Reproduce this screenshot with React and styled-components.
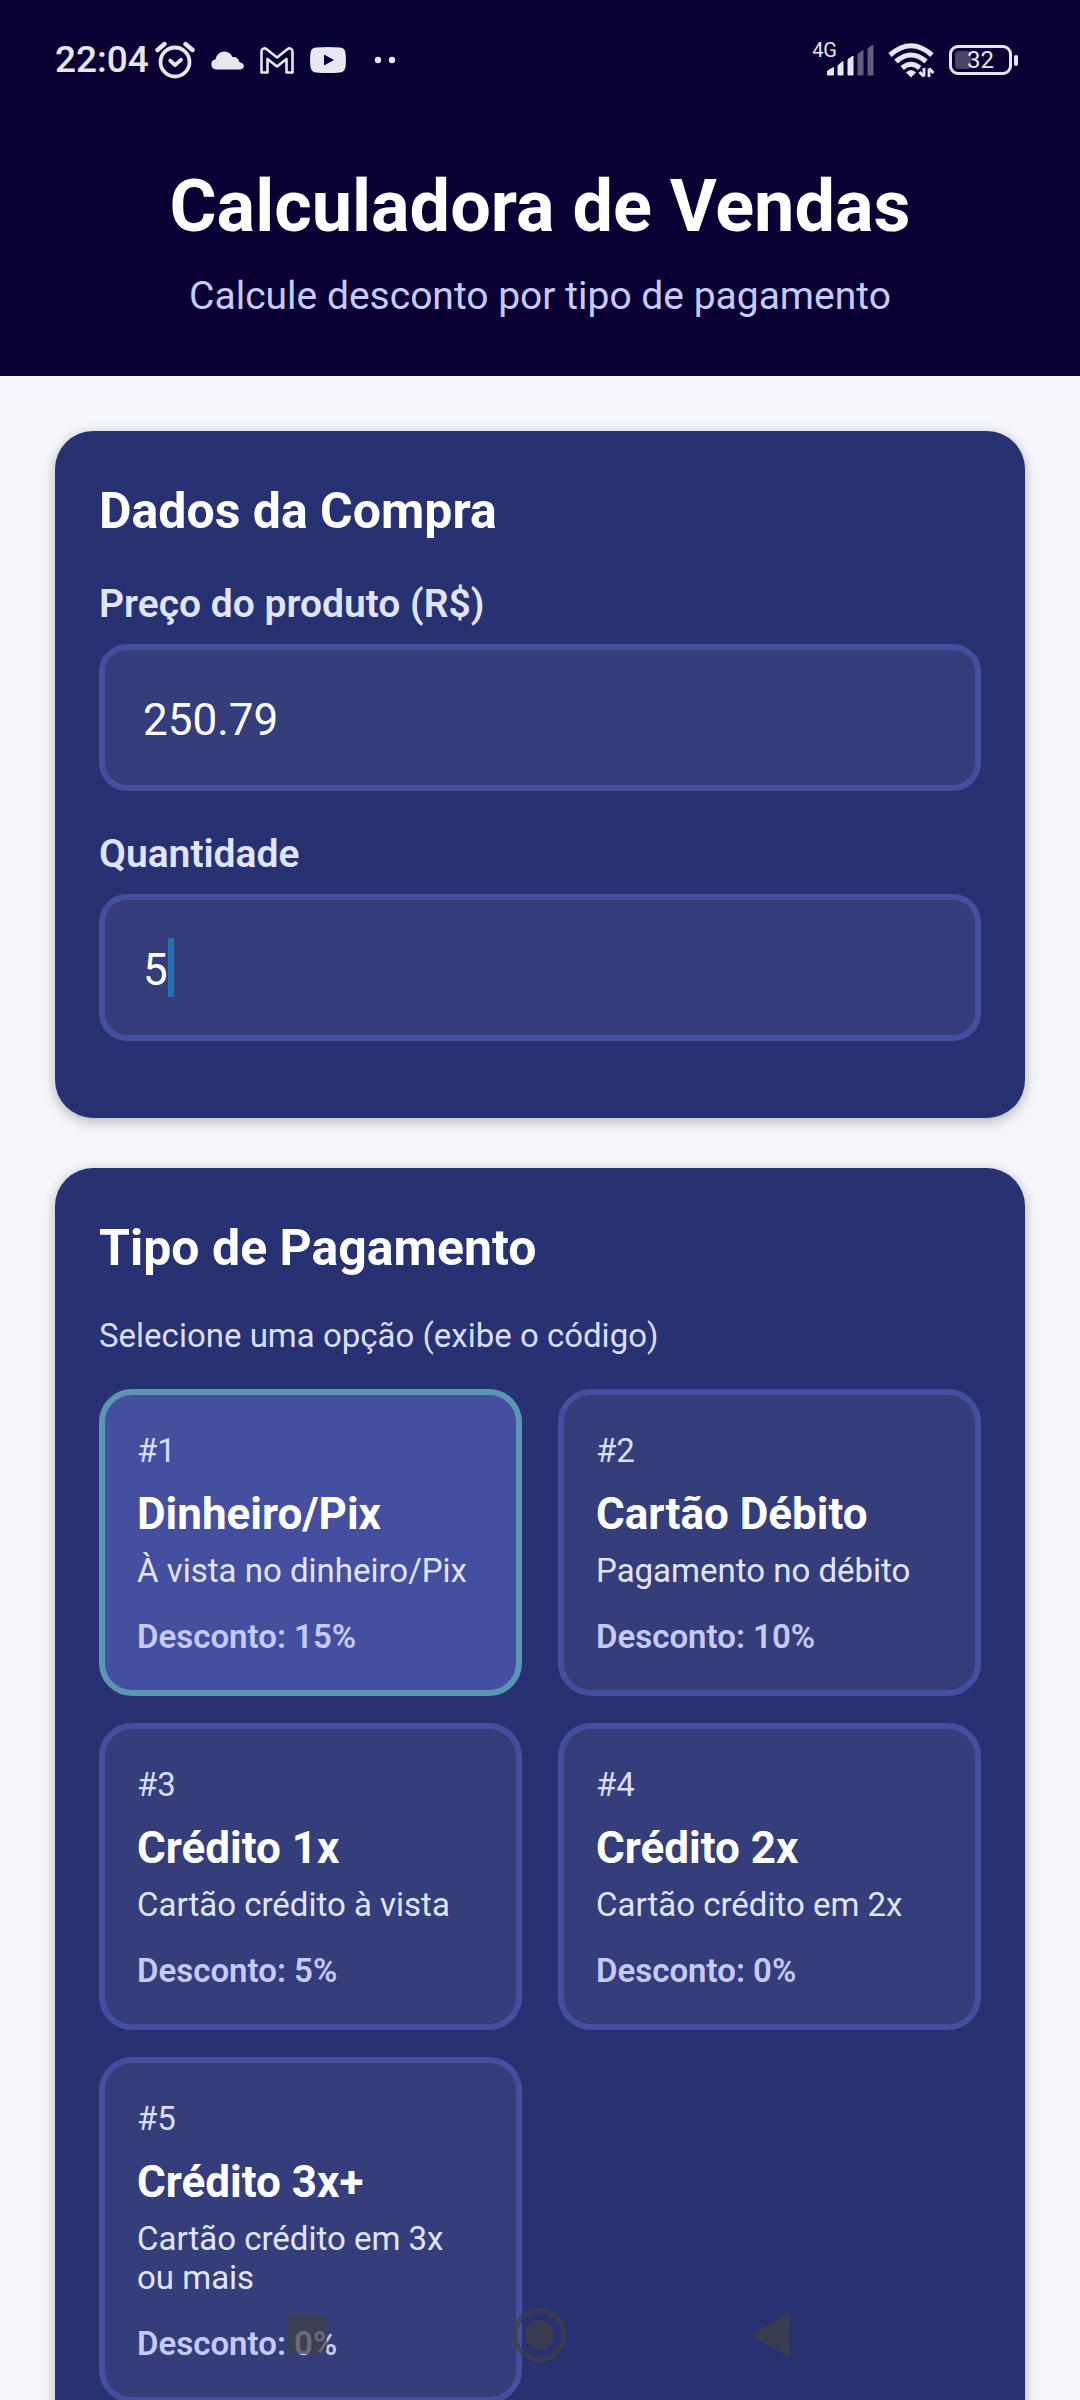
import React, { useState } from "react";
import styled, { createGlobalStyle } from "styled-components";

const color = {
  header: "#0b0034",
  page: "#f4f6fb",
  card: "#283171",
  field: "#353d7a",
  line: "#454fa0",
  selectedLine: "#5b96b2",
  caret: "#2271b0",
  white: "#ffffff",
  label: "#e2e5ff",
  muted: "#dadeff",
  accent: "#c7cbfc",
  status: "#e7e5ee",
  nav: "rgba(66, 64, 67, 0.7)",
};

const GlobalStyle = createGlobalStyle`
  *, *::before, *::after { box-sizing: border-box; }
  body {
    margin: 0;
    background: ${color.page};
    font-family: Roboto, "Liberation Sans", sans-serif;
  }
  button, input { font: inherit; color: inherit; }
`;

const Screen = styled.div`
  height: 100vh;
  display: flex;
  flex-direction: column;
  background: ${color.page};
`;

const StatusBar = styled.div`
  height: 120px;
  padding: 0 62px 0 55px;
  display: flex;
  align-items: center;
  justify-content: space-between;
  background: ${color.header};
  color: ${color.status};
`;

const StatusGroup = styled.div`
  display: flex;
  align-items: center;
  gap: ${(p) => p.$gap}px;
`;

const Clock = styled.time`
  font-size: 37px;
  line-height: 44px;
  font-weight: 500;
`;

const Icon = styled.svg`
  display: block;
  flex: none;
`;

const NetworkLabel = styled.span`
  margin-right: -11px;
  font-size: 20px;
  line-height: 12px;
  align-self: flex-start;
`;

const Battery = styled.div`
  display: flex;
  align-items: center;
  gap: 2px;
`;

const BatteryBody = styled.div`
  width: 63px;
  height: 30px;
  padding: 3px;
  border: 3px solid ${color.status};
  border-radius: 9px;
  display: grid;
  align-items: center;
`;

const BatteryLevel = styled.div`
  grid-area: 1 / 1;
  width: 32%;
  height: 18px;
  border-radius: 4px;
  background: #4a4269;
`;

const BatteryText = styled.span`
  grid-area: 1 / 1;
  text-align: center;
  font-size: 24px;
  line-height: 18px;
`;

const BatteryTip = styled.div`
  width: 4px;
  height: 11px;
  border-radius: 2px;
  background: ${color.status};
`;

const Header = styled.header`
  padding: 39px 55px 54px;
  display: flex;
  flex-direction: column;
  gap: 15px;
  text-align: center;
  background: ${color.header};
`;

const Title = styled.h1`
  margin: 0;
  font-size: 72px;
  line-height: 96px;
  font-weight: 700;
  color: ${color.white};
`;

const Subtitle = styled.p`
  margin: 0;
  font-size: 39px;
  line-height: 52px;
  color: ${color.accent};
`;

const Content = styled.main`
  flex: 1;
  min-height: 0;
  overflow-y: auto;
  scrollbar-width: none;
  padding: 55px;
  display: flex;
  flex-direction: column;
  gap: 50px;
`;

const Card = styled.section`
  flex: none;
  padding: 44px;
  border-radius: 38px;
  background: ${color.card};
  box-shadow: 0 5px 14px rgba(0, 0, 0, 0.18), 0 1px 12px rgba(0, 0, 0, 0.1);
`;

const CardTitle = styled.h2`
  margin: 0 0 27px;
  font-size: 50px;
  line-height: 72px;
  font-weight: 700;
  color: ${color.white};
`;

const Field = styled.div`
  margin-bottom: 33px;
  display: flex;
  flex-direction: column;
  gap: 10px;
`;

const FieldLabel = styled.label`
  font-size: 39px;
  line-height: 60px;
  font-weight: 600;
  color: ${color.label};
`;

const InputBox = styled.div`
  position: relative;
  font-size: 44px;
  color: ${color.white};
`;

const Input = styled.input`
  display: block;
  width: 100%;
  height: 147px;
  padding: 4px 38px 0;
  border: 6px solid ${color.line};
  border-radius: 28px;
  outline: none;
  background: ${color.field};
`;

const Caret = styled.span`
  position: absolute;
  top: 44px;
  left: calc(44px + ${(p) => p.$chars}ch);
  width: 6px;
  height: 59px;
  background: ${color.caret};
`;

const Hint = styled.p`
  margin: 0 0 28px;
  font-size: 33px;
  line-height: 50px;
  color: ${color.muted};
`;

const OptionGrid = styled.div`
  display: grid;
  grid-template-columns: 1fr 1fr;
  align-items: start;
  gap: 27px 36px;
`;

const Option = styled.button`
  padding: 32px 32px 30px;
  border: 6px solid ${(p) => (p.$selected ? color.selectedLine : color.line)};
  border-radius: 33px;
  display: flex;
  flex-direction: column;
  text-align: left;
  background: ${(p) => (p.$selected ? color.line : color.field)};
  cursor: pointer;
`;

const OptionCode = styled.span`
  margin-bottom: 10px;
  font-size: 33px;
  line-height: 48px;
  color: ${color.muted};
`;

const OptionName = styled.span`
  margin-bottom: 8px;
  font-size: 44px;
  line-height: 58px;
  font-weight: 700;
  color: ${color.white};
`;

const OptionDetail = styled.span`
  margin-bottom: 24px;
  font-size: 33px;
  line-height: 39px;
  color: ${color.label};
`;

const OptionDiscount = styled.span`
  font-size: 33px;
  line-height: 46px;
  font-weight: 600;
  color: ${color.accent};
`;

const NavBar = styled.nav`
  position: fixed;
  left: 0;
  right: 0;
  bottom: 0;
  height: 130px;
  display: flex;
  align-items: center;
  justify-content: center;
  gap: 173px;
  pointer-events: none;
`;

const NavButton = styled.button`
  width: 60px;
  height: 60px;
  padding: 0;
  border: 0;
  background: none;
  color: ${color.nav};
  pointer-events: auto;
`;

const AlarmIcon = () => (
  <Icon width="40" height="38" viewBox="0 0 40 38" fill="none" stroke="currentColor" strokeLinecap="round" aria-hidden="true">
    <circle cx="20" cy="21" r="14.5" strokeWidth="3.8" />
    <path d="M2.5 9 9.5 3M37.5 9l-7-6" strokeWidth="4.4" />
    <path d="m15.2 19.6 4.8 4.600 6-5.400" strokeWidth="3.8" strokeLinejoin="round" />
  </Icon>
);

const CloudIcon = () => (
  <Icon width="33" height="19" viewBox="0 0 33 19" fill="currentColor" aria-hidden="true">
    <path d="M5.200 18.500A5.200 5.200 0 0 1 4.600 8.200C5.400 3.800 9 .5 13.400.5c4 0 6.600 2.200 8 5.600 3.600-.5 6.500 1.600 7 5.100 2.600.2 4.400 1.700 4.400 3.800 0 2.200-1.600 3.500-3.900 3.500z" />
  </Icon>
);

const MailIcon = () => (
  <Icon width="34" height="27" viewBox="0 0 34 27" fill="none" stroke="currentColor" strokeWidth="2.6" strokeLinejoin="round" aria-hidden="true">
    <path d="M1.500 4.500C1.500 1.500 4.500.6 6.700 2.200L17 10.500 27.300 2.200C29.500.6 32.500 1.500 32.500 4.500V25.500H26.500V12L17 19.500 7.500 12V25.500H1.500z" />
  </Icon>
);

const VideoIcon = () => (
  <Icon width="36" height="26" viewBox="0 0 36 26" aria-hidden="true">
    <path
      d="M6 .6Q18-.5 30 .6 35 1 35.500 6 36.400 13 35.500 20 35 25 30 25.400 18 26.500 6 25.400 1 25 .5 20-.4 13 .5 6 1 1 6 .6z"
      fill="currentColor"
    />
    <path d="M14 7.500v11l10-5.500z" fill={color.header} />
  </Icon>
);

const MoreIcon = () => (
  <Icon width="22" height="8" viewBox="0 0 22 8" fill="currentColor" aria-hidden="true">
    <circle cx="4" cy="4" r="3.200" />
    <circle cx="18" cy="4" r="3.200" />
  </Icon>
);

const SignalIcon = () => (
  <Icon width="50" height="32" viewBox="0 0 50 32" fill="currentColor" aria-hidden="true">
    <path d="M1.500 27 7.500 23.500V31h-6zM12 21.500l5-4V31h-5zM22 15.500l5-3.500v19h-5z" stroke="currentColor" strokeLinejoin="round" />
    <path d="M32 10l5-3.500V31h-5zM42 4.500l5-3.500v30h-5z" stroke="currentColor" strokeLinejoin="round" opacity="0.4" />
  </Icon>
);

const WifiIcon = () => (
  <Icon width="47" height="36" viewBox="0 0 47 36" aria-hidden="true">
    <g fill="none" stroke="currentColor" strokeWidth="5">
      <path d="M2 13Q23 -5.500 44 13" />
      <path d="M8 19.500Q23 6.500 38 19.500" />
      <path d="M14.200 26Q23 18.500 31.800 26" />
    </g>
    <path d="M18 30.500q5-5 10 0L23 35.500z" fill="currentColor" />
    <path d="M36 26v8.500M35.800 34.500 31.500 30M41 35v-8.500M41.200 26.500 45.500 31" fill="none" stroke="currentColor" strokeWidth="2.800" />
  </Icon>
);

const RecentsIcon = () => (
  <Icon width="60" height="60" viewBox="0 0 60 60" fill="currentColor" aria-hidden="true">
    <rect x="11" y="10" width="39" height="39" rx="6" />
  </Icon>
);

const HomeIcon = () => (
  <Icon width="60" height="60" viewBox="0 0 60 60" aria-hidden="true">
    <circle cx="29.500" cy="30" r="24.500" fill="none" stroke="currentColor" strokeWidth="5" />
    <circle cx="29.500" cy="30" r="14.700" fill="currentColor" />
  </Icon>
);

const BackIcon = () => (
  <Icon width="60" height="60" viewBox="0 0 60 60" fill="currentColor" aria-hidden="true">
    <path d="M11.500 27.800 44 8Q47.500 6.500 47.500 10V50Q47.500 53.500 44 52L11.500 32.200Q8.500 30 11.500 27.800z" />
  </Icon>
);

const options = [
  { code: 1, name: "Dinheiro/Pix", detail: "À vista no dinheiro/Pix", discount: 15 },
  { code: 2, name: "Cartão Débito", detail: "Pagamento no débito", discount: 10 },
  { code: 3, name: "Crédito 1x", detail: "Cartão crédito à vista", discount: 5 },
  { code: 4, name: "Crédito 2x", detail: "Cartão crédito em 2x", discount: 0 },
  { code: 5, name: "Crédito 3x+", detail: "Cartão crédito em 3x ou mais", discount: 0 },
];

export default function App() {
  const [price, setPrice] = useState("250.79");
  const [quantity, setQuantity] = useState("5");
  const [selected, setSelected] = useState(1);

  return (
    <Screen>
      <GlobalStyle />
      <StatusBar>
        <StatusGroup $gap={28}>
          <StatusGroup $gap={16}>
            <StatusGroup $gap={6}>
              <Clock>22:04</Clock>
              <AlarmIcon />
            </StatusGroup>
            <CloudIcon />
            <MailIcon />
            <VideoIcon />
          </StatusGroup>
          <MoreIcon />
        </StatusGroup>
        <StatusGroup $gap={14}>
          <StatusGroup $gap={12}>
            <StatusGroup $gap={0}>
              <NetworkLabel>4G</NetworkLabel>
              <SignalIcon />
            </StatusGroup>
            <WifiIcon />
          </StatusGroup>
          <Battery>
            <BatteryBody>
              <BatteryLevel />
              <BatteryText>32</BatteryText>
            </BatteryBody>
            <BatteryTip />
          </Battery>
        </StatusGroup>
      </StatusBar>

      <Header>
        <Title>Calculadora de Vendas</Title>
        <Subtitle>Calcule desconto por tipo de pagamento</Subtitle>
      </Header>

      <Content>
        <Card>
          <CardTitle>Dados da Compra</CardTitle>
          <Field>
            <FieldLabel htmlFor="price">Preço do produto (R$)</FieldLabel>
            <InputBox>
              <Input id="price" inputMode="decimal" value={price} onChange={(e) => setPrice(e.target.value)} />
            </InputBox>
          </Field>
          <Field>
            <FieldLabel htmlFor="quantity">Quantidade</FieldLabel>
            <InputBox>
              <Input id="quantity" inputMode="numeric" value={quantity} onChange={(e) => setQuantity(e.target.value)} />
              <Caret $chars={quantity.length} />
            </InputBox>
          </Field>
        </Card>

        <Card>
          <CardTitle>Tipo de Pagamento</CardTitle>
          <Hint>Selecione uma opção (exibe o código)</Hint>
          <OptionGrid>
            {options.map((option) => (
              <Option
                key={option.code}
                type="button"
                aria-pressed={option.code === selected}
                $selected={option.code === selected}
                onClick={() => setSelected(option.code)}
              >
                <OptionCode>#{option.code}</OptionCode>
                <OptionName>{option.name}</OptionName>
                <OptionDetail>{option.detail}</OptionDetail>
                <OptionDiscount>Desconto: {option.discount}%</OptionDiscount>
              </Option>
            ))}
          </OptionGrid>
        </Card>
      </Content>

      <NavBar>
        <NavButton type="button" aria-label="Recentes">
          <RecentsIcon />
        </NavButton>
        <NavButton type="button" aria-label="Início">
          <HomeIcon />
        </NavButton>
        <NavButton type="button" aria-label="Voltar">
          <BackIcon />
        </NavButton>
      </NavBar>
    </Screen>
  );
}
